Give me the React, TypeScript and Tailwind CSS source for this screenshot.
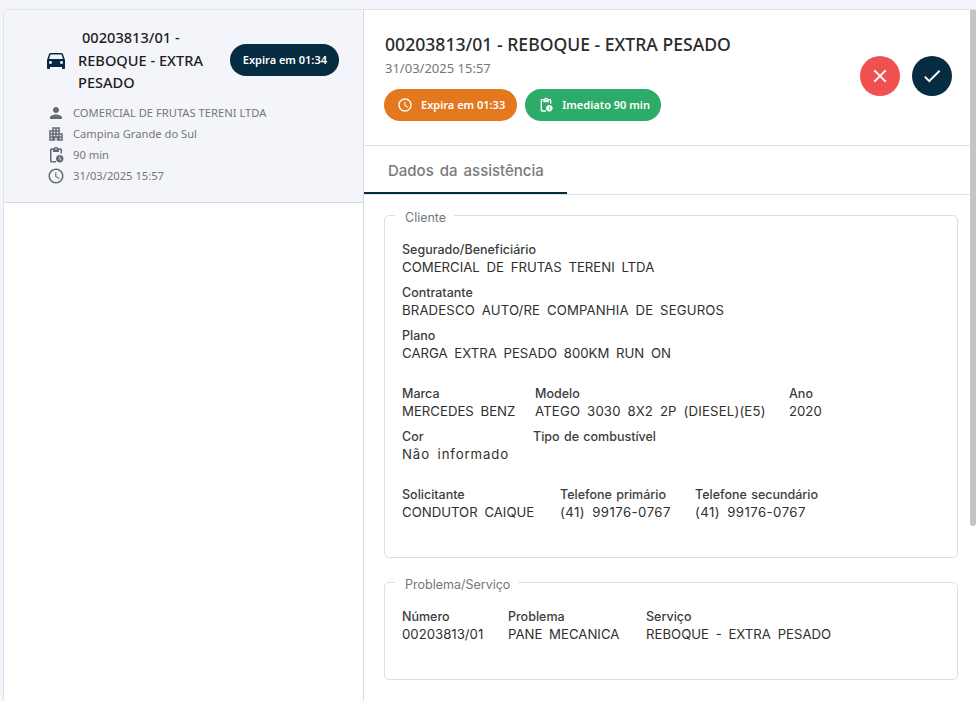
const paths = {
  car: "M18.92 6.01C18.72 5.42 18.16 5 17.5 5h-11c-.66 0-1.21.42-1.42 1.01L3 12v8c0 .55.45 1 1 1h1c.55 0 1-.45 1-1v-1h12v1c0 .55.45 1 1 1h1c.55 0 1-.45 1-1v-8l-2.08-5.99zM6.5 16c-.83 0-1.5-.67-1.5-1.5S5.67 13 6.5 13s1.5.67 1.5 1.5S7.33 16 6.5 16zm11 0c-.83 0-1.5-.67-1.5-1.5s.67-1.5 1.5-1.5 1.5.67 1.5 1.5-.67 1.5-1.5 1.5zM5 11l1.5-4.5h11L19 11H5z",
  person: "M12 12c2.21 0 4-1.79 4-4s-1.79-4-4-4-4 1.79-4 4 1.79 4 4 4zm0 2c-2.67 0-8 1.34-8 4v2h16v-2c0-2.66-5.33-4-8-4z",
  building: "M17 11V3H7v4H3v14h8v-4h2v4h8V11h-4zM7 19H5v-2h2v2zm0-4H5v-2h2v2zm0-4H5V9h2v2zm4 4H9v-2h2v2zm0-4H9V9h2v2zm0-4H9V5h2v2zm4 8h-2v-2h2v2zm0-4h-2V9h2v2zm0-4h-2V5h2v2zm4 12h-2v-2h2v2zm0-4h-2v-2h2v2z",
  pending: "M17 12c-2.76 0-5 2.24-5 5s2.24 5 5 5 5-2.24 5-5-2.24-5-5-5zm1.65 7.35L16.5 17.2V14h1v2.79l1.85 1.85-.7.71zM18 3h-3.18C14.4 1.84 13.3 1 12 1s-2.4.84-2.82 2H6c-1.1 0-2 .9-2 2v15c0 1.1.9 2 2 2h6v-2H6V5h2v3h8V5h2v5h2V5c0-1.1-.9-2-2-2zm-6 2c-.55 0-1-.45-1-1s.45-1 1-1 1 .45 1 1-.45 1-1 1z",
  clock: "M11.99 2C6.47 2 2 6.48 2 12s4.47 10 9.99 10C17.52 22 22 17.52 22 12S17.52 2 11.99 2zM12 20c-4.42 0-8-3.58-8-8s3.58-8 8-8 8 3.58 8 8-3.58 8-8 8zm.5-13H11v6l5.25 3.15.75-1.23-4.5-2.67z",
  close: "M19 6.41 17.59 5 12 10.59 6.41 5 5 6.41 10.59 12 5 17.59 6.41 19 12 13.41 17.59 19 19 17.59 13.41 12z",
  check: "M9 16.17 4.83 12l-1.41 1.41L9 19 21 7l-1.41-1.41z",
};

const Icon = ({ d, className }: { d: string; className: string }) => (
  <svg viewBox="0 0 24 24" fill="currentColor" className={className}>
    <path d={d} />
  </svg>
);

const Field = ({
  label,
  value,
  className,
  valueClass,
}: {
  label: string;
  value?: string;
  className?: string;
  valueClass?: string;
}) => (
  <div className={className}>
    <p className="text-[12.5px] leading-[17px] font-medium text-[#3d3d3d] [word-spacing:1px] whitespace-nowrap">{label}</p>
    <p className={`text-[13.2px] leading-[19px] text-[#2f2f2f] [word-spacing:3px] whitespace-nowrap ${valueClass ?? ""}`}>{value}</p>
  </div>
);

const SideRow = ({ d, text }: { d: string; text: string }) => (
  <div className="flex items-center h-[21px]">
    <Icon d={d} className="w-[18px] h-[18px] mr-[8px] text-[#666a70] shrink-0" />
    <span className="text-[11.2px] text-[#74777c]">{text}</span>
  </div>
);

const Legend = ({ text }: { text: string }) => (
  <legend className="ml-[-7px] pl-[10px] pr-[8px] text-[12.5px] leading-[17px] text-[#74777c]">
    <span className="block translate-y-[2px]">{text}</span>
  </legend>
);

export default function App() {
  return (
    <div className="h-[701px] overflow-hidden bg-[#f3f5fa] pt-[9px] pl-[3px] font-['Inter',sans-serif]">
      <div className="flex h-[692px] border-t border-l border-[#dde2ec] rounded-tl-md bg-white">
        <div className="w-[360px] shrink-0 border-r border-[#d9dbe0]">
          <div className="h-[193px] bg-[#f3f5fa] border-b border-[#d9dbe0] pl-[43px] pr-[24px] pt-[16px] font-['Noto_Sans',sans-serif]">
            <div className="flex items-center">
              <Icon d={paths.car} className="w-[24px] h-[24px] text-[#062c41] ml-[-3px] mr-[10px] shrink-0" />
              <p className="w-[146px] text-[14.6px] leading-[22.5px] font-medium text-[#1e1e1e] indent-[4px]">
                00203813/01 - REBOQUE - EXTRA PESADO
              </p>
              <span className="ml-auto h-[32px] pl-[13px] pr-[12px] flex items-center rounded-full bg-[#062c41] text-white text-[11px] font-semibold whitespace-nowrap">
                Expira em 01:34
              </span>
            </div>
            <div className="mt-[9px]">
              <SideRow d={paths.person} text="COMERCIAL DE FRUTAS TERENI LTDA" />
              <SideRow d={paths.building} text="Campina Grande do Sul" />
              <SideRow d={paths.pending} text="90 min" />
              <SideRow d={paths.clock} text="31/03/2025 15:57" />
            </div>
          </div>
        </div>

        <div className="flex-1 min-w-0">
          <div className="h-[136px] border-b border-[#e2e2e2] pl-[21px] pr-[18px] pt-[22px] flex justify-between">
            <div className="font-['Noto_Sans',sans-serif]">
              <h1 className="text-[17.6px] leading-[24px] font-medium text-[#2b2b2b]">
                00203813/01 - REBOQUE - EXTRA PESADO
              </h1>
              <p className="text-[13px] leading-[18px] mt-[3px] text-[#74777c]">31/03/2025 15:57</p>
              <div className="flex gap-[8px] mt-[12px] ml-[-1px]">
                <span className="h-[32px] pl-[13px] pr-[12px] flex items-center gap-[8px] rounded-full bg-[#e4781f] text-white text-[11px] font-semibold">
                  <Icon d={paths.clock} className="w-[16px] h-[16px]" />
                  Expira em 01:33
                </span>
                <span className="h-[32px] pl-[13px] pr-[11px] flex items-center gap-[8px] rounded-full bg-[#2dab69] text-white text-[11px] font-semibold">
                  <Icon d={paths.pending} className="w-[16px] h-[16px]" />
                  Imediato 90 min
                </span>
              </div>
            </div>
            <div className="flex gap-[12px] mt-[24px]">
              <button className="w-[40px] h-[40px] rounded-full bg-[#f15050] flex items-center justify-center text-white">
                <Icon d={paths.close} className="w-[22px] h-[22px]" />
              </button>
              <button className="w-[40px] h-[40px] rounded-full bg-[#062c41] flex items-center justify-center text-white">
                <Icon d={paths.check} className="w-[22px] h-[22px]" />
              </button>
            </div>
          </div>

          <div className="h-[49px] border-b border-[#e2e2e2]">
            <div className="w-[203px] h-[48px] border-b-2 border-[#062c41] pl-[24px] pt-[15px] text-[15px] leading-[20px] font-medium text-[#7a7a7a] [word-spacing:2px]">
              Dados da assistência
            </div>
          </div>

          <div className="pl-[20px] pr-[12px] pt-[12px]">
            <fieldset className="h-[351px] border border-[#dfdfdf] rounded-[5px] pl-[17px] pt-[17px]">
              <Legend text="Cliente" />
              <div className="flex flex-col gap-[7px]">
                <Field label="Segurado/Beneficiário" value="COMERCIAL DE FRUTAS TERENI LTDA" />
                <Field label="Contratante" value="BRADESCO AUTO/RE COMPANHIA DE SEGUROS" valueClass="tracking-[0.13px]" />
                <Field label="Plano" value="CARGA EXTRA PESADO 800KM RUN ON" />
              </div>
              <div className="flex mt-[22px]">
                <Field className="w-[133px]" label="Marca" value="MERCEDES BENZ" />
                <Field className="w-[254px]" label="Modelo" value="ATEGO 3030 8X2 2P (DIESEL)(E5)" valueClass="tracking-[0.17px]" />
                <Field label="Ano" value="2020" />
              </div>
              <div className="flex mt-[7px]">
                <Field className="w-[131px]" label="Cor" value="Não informado" valueClass="tracking-[0.9px]" />
                <Field label="Tipo de combustível" />
              </div>
              <div className="flex mt-[22px]">
                <Field className="w-[158px]" label="Solicitante" value="CONDUTOR CAIQUE" />
                <Field className="w-[135px]" label="Telefone primário" value="(41) 99176-0767" valueClass="tracking-[0.45px]" />
                <Field label="Telefone secundário" value="(41) 99176-0767" valueClass="tracking-[0.45px]" />
              </div>
            </fieldset>

            <fieldset className="mt-[16px] h-[106px] border border-[#dfdfdf] rounded-[5px] pl-[17px] pt-[17px]">
              <Legend text="Problema/Serviço" />
              <div className="flex">
                <Field className="w-[106px]" label="Número" value="00203813/01" />
                <Field className="w-[138px]" label="Problema" value="PANE MECANICA" />
                <Field label="Serviço" value="REBOQUE - EXTRA PESADO" />
              </div>
            </fieldset>
          </div>
        </div>

        <div className="w-[6px] shrink-0 bg-white">
          <div className="h-[516px] bg-[#c4c4c4] rounded-b-sm" />
        </div>
      </div>
    </div>
  );
}
